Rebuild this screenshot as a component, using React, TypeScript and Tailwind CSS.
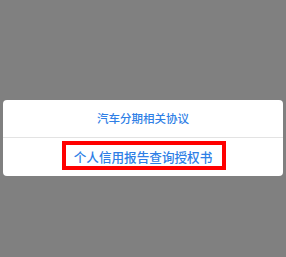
import React from "react";

export default function App() {
  const font = { fontFamily: '"Noto Sans CJK SC", "Noto Sans", sans-serif' };
  return (
    <div className="w-[286px] h-[257px] bg-[#808080] pt-[100px] px-[3px]" style={font}>
      <div className="bg-white rounded-[4px] flex flex-col">
        <div className="h-[38px] flex items-center justify-center text-[11.5px] font-medium text-[#2f7fe6] border-b border-[#e3e3e3]">
          汽车分期相关协议
        </div>
        <div className="relative h-[38px] flex items-center justify-center text-[12.6px] font-medium text-[#2f7fe6]">
          <span className="pt-[1px]">个人信用报告查询授权书</span>
          <div className="absolute left-[59px] top-[3px] w-[164px] h-[29px] border-[4px] border-[#ff0000]" />
        </div>
      </div>
    </div>
  );
}
